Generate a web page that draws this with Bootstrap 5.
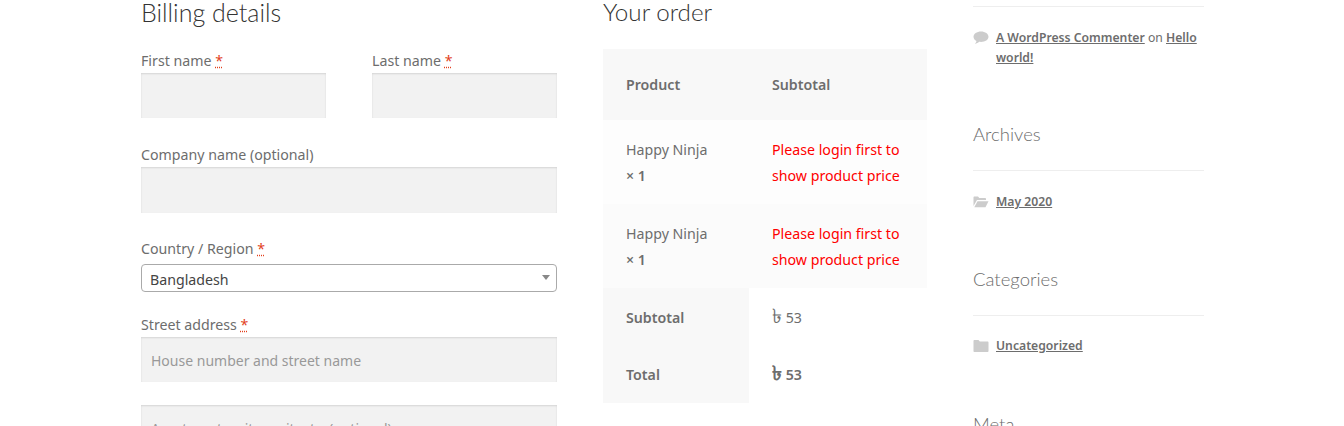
<!DOCTYPE html>
<html lang="en">
<head>
<meta charset="utf-8">
<title>Checkout</title>
<link href="https://cdn.jsdelivr.net/npm/bootstrap@5.3.0/dist/css/bootstrap.min.css" rel="stylesheet">
<style>
html,body{height:426px;overflow:hidden;background:#fff}
body{font-family:"Noto Sans","Liberation Sans",sans-serif;font-size:14.2px;color:#6d6d6d;line-height:26px}
.page-wrap{padding-left:141px;gap:46px;align-items:flex-start}
.col-billing{width:416px;flex:none}
.col-order{width:324px;flex:none}
.col-side{width:231px;flex:none}
.sec-title{font-family:"Lato",sans-serif;font-weight:300;font-size:25px;line-height:24px;color:#333;margin:0 0 24px}
.col-order .sec-title{margin-bottom:25px;font-size:24.2px}
.fld{margin-bottom:24px}
.fld-a{margin-bottom:23px}
.fld-b{margin-bottom:20px}
.fld label{display:block;margin:0;line-height:25px}
.fld abbr{color:#e2401c;text-decoration-color:#e2401c}
.inp.form-control{background:#f2f2f2;border:0;border-radius:0;box-shadow:inset 0 1px 2px rgba(0,0,0,.125);height:45px;padding:2px 10px 0;font-size:14px;color:#6d6d6d}
.inp.form-control::placeholder{color:#999;opacity:1}
.inp-tall.form-control{height:46px}
.half-inp.form-control{width:185px}
.sel-wrap{position:relative;margin-top:3px}
.sel-wrap .form-select{height:28px;border:1px solid #aaa;border-radius:4px;background-image:none;padding:4px 8px 0;font-size:14.2px;line-height:22px;color:#444}
.sel-arrow{position:absolute;right:7px;top:11px;border:4px solid transparent;border-top:5px solid #888;border-bottom:0}
.order-tbl{margin:0;width:324px;table-layout:fixed;--bs-table-bg:transparent;--bs-table-color:#6d6d6d;color:#6d6d6d}
.order-tbl th,.order-tbl td{border:0;padding:2px 23px 0;vertical-align:middle;line-height:26px;font-size:14.2px}
.order-tbl .hd-row th{padding-top:0}
.order-tbl .last-ft th,.order-tbl .last-ft td{padding-top:0}
.order-tbl th{font-weight:600}
.order-tbl .w1{width:146px}
.hd-row th{height:71px;background:#f8f8f8}
.pr-row td{height:84px;background:#fdfdfd}
.pr-row.alt td{background:#fbfbfb}
.ft-row th{background:#f8f8f8}
.ft-row th,.ft-row td{height:57px}
.ft-row.first-ft th,.ft-row.first-ft td{height:58px}
.qty{font-weight:600}
.login-msg{color:#f00}
.taka{font-size:20px;line-height:0}
.side-rule{border-top:1px solid #eee;margin-top:6px;padding-top:21px}
.side-item{font-size:12.2px;line-height:20px;padding-left:23px;position:relative;margin:0}
.side-item a{color:#6d6d6d;font-weight:600}
.side-ic{position:absolute;left:0;top:3px;width:16px;height:14px;fill:#ccc}
.wd-title{font-family:"Lato",sans-serif;font-weight:300;font-size:18.5px;line-height:26px;color:#6d6d6d;margin:0;padding-bottom:23px;border-bottom:1px solid #eee}
.wd-1{margin-top:53px}
.wd-2{margin-top:54px}
.wd-3{margin-top:55px}
.wd-body{padding-top:21px}
.wd-2 .wd-body{padding-top:20px}
</style>
</head>
<body>
<div class="d-flex page-wrap">
  <div class="col-billing">
    <h3 class="sec-title">Billing details</h3>
    <div class="d-flex justify-content-between fld">
      <div>
        <label for="fn">First name <abbr title="required">*</abbr></label>
        <input id="fn" class="form-control inp half-inp" type="text">
      </div>
      <div>
        <label for="ln">Last name <abbr title="required">*</abbr></label>
        <input id="ln" class="form-control inp half-inp" type="text">
      </div>
    </div>
    <div class="fld fld-a">
      <label for="cn">Company name (optional)</label>
      <input id="cn" class="form-control inp inp-tall" type="text">
    </div>
    <div class="fld fld-b">
      <label for="ct">Country / Region <abbr title="required">*</abbr></label>
      <div class="sel-wrap">
        <select id="ct" class="form-select"><option>Bangladesh</option></select>
        <span class="sel-arrow"></span>
      </div>
    </div>
    <div class="fld fld-a">
      <label for="st">Street address <abbr title="required">*</abbr></label>
      <input id="st" class="form-control inp" type="text" placeholder="House number and street name">
    </div>
    <div class="fld">
      <input class="form-control inp" type="text" placeholder="Apartment, suite, unit, etc. (optional)">
    </div>
  </div>
  <div class="col-order">
    <h3 class="sec-title">Your order</h3>
    <table class="table order-tbl">
      <thead>
        <tr class="hd-row"><th class="w1">Product</th><th>Subtotal</th></tr>
      </thead>
      <tbody>
        <tr class="pr-row"><td>Happy Ninja<br><span class="qty">× 1</span></td><td class="login-msg">Please login first to show product price</td></tr>
        <tr class="pr-row alt"><td>Happy Ninja<br><span class="qty">× 1</span></td><td class="login-msg">Please login first to show product price</td></tr>
      </tbody>
      <tfoot>
        <tr class="ft-row first-ft"><th>Subtotal</th><td><span class="taka">৳</span> 53</td></tr>
        <tr class="ft-row last-ft"><th>Total</th><td class="fw-semibold"><span class="taka">৳</span> 53</td></tr>
      </tfoot>
    </table>
  </div>
  <div class="col-side">
    <div class="side-rule">
      <p class="side-item">
        <svg class="side-ic" viewBox="0 0 16 14"><path d="M8 0.5C3.8 0.5 0.5 2.8 0.5 5.7c0 1.8 1.2 3.3 3 4.3-.2 1-.8 2-1.6 2.8 1.7-.2 3.2-.9 4.3-2 .6.1 1.2.1 1.8.1 4.2 0 7.5-2.3 7.5-5.2S12.2.5 8 .5z"/></svg>
        <a href="#">A WordPress Commenter</a> on <a href="#">Hello world!</a>
      </p>
    </div>
    <div class="wd-1">
      <h4 class="wd-title">Archives</h4>
      <div class="wd-body"><p class="side-item">
        <svg class="side-ic" viewBox="0 0 16 14"><path d="M.5 11V2.5c0-.6.4-1 1-1h3.5l1.3 1.5H12c.6 0 1 .4 1 1v1H4L.5 11z"/><path d="M4.5 6.2h11l-3 6H1.3z"/></svg>
        <a href="#">May 2020</a></p></div>
    </div>
    <div class="wd-2">
      <h4 class="wd-title">Categories</h4>
      <div class="wd-body"><p class="side-item">
        <svg class="side-ic" viewBox="0 0 16 14"><path d="M.5 12V2c0-.6.4-1 1-1h4l1.3 1.5H14.5c.6 0 1 .4 1 1V12c0 .6-.4 1-1 1h-13c-.6 0-1-.4-1-1z"/></svg>
        <a href="#">Uncategorized</a></p></div>
    </div>
    <div class="wd-3">
      <h4 class="wd-title">Meta</h4>
    </div>
  </div>
</div>
<script src="https://cdn.jsdelivr.net/npm/bootstrap@5.3.0/dist/js/bootstrap.bundle.min.js"></script>
</body>
</html>
